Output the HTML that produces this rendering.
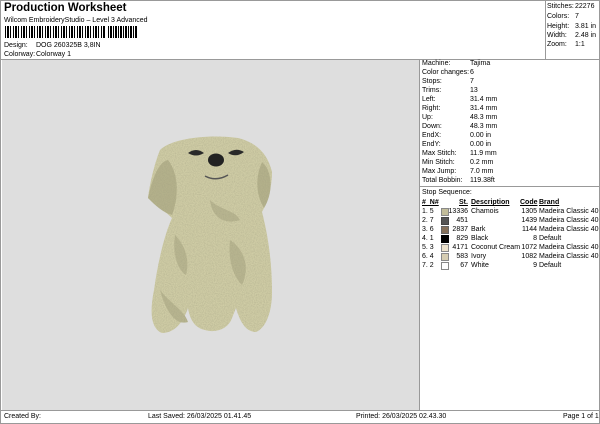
<!DOCTYPE html>
<html><head><style>
body{margin:0;width:600px;height:424px;background:#fff;font-family:"Liberation Sans",sans-serif;position:relative;overflow:hidden;color:#000}
.a{position:absolute;white-space:nowrap;font-size:7px;line-height:9px}
</style></head><body>
<div style="position:absolute;left:0;top:0;width:598px;height:422px;border:1px solid #999"></div>
<div class="a" style="left:4px;top:1px;font-size:11.5px;line-height:14px;font-weight:bold">Production Worksheet</div>
<div class="a" style="left:4px;top:16px">Wilcom EmbroideryStudio – Level 3 Advanced</div>
<div style="position:absolute;left:5px;top:26px;width:100px;height:12px;background:repeating-linear-gradient(90deg,#000 0 1px,#fff 1px 2px,#000 2px 4px,#fff 4px 5px,#000 5px 6px,#fff 6px 8px)"></div>
<div style="position:absolute;left:108px;top:26px;width:30px;height:12px;background:repeating-linear-gradient(90deg,#000 0 1px,#fff 1px 2px,#000 2px 4px,#fff 4px 5px)"></div>
<div class="a" style="left:4px;top:41px">Design:</div><div class="a" style="left:36px;top:41px">DOG 260325B 3,8IN</div>
<div class="a" style="left:4px;top:50px">Colorway:</div><div class="a" style="left:36px;top:50px">Colorway 1</div>
<div style="position:absolute;left:545px;top:0;width:1px;height:59px;background:#999"></div>
<div class="a" style="left:547px;top:2px">Stitches:</div><div class="a" style="left:575px;top:2px">22276</div>
<div class="a" style="left:547px;top:12px">Colors:</div><div class="a" style="left:575px;top:12px">7</div>
<div class="a" style="left:547px;top:22px">Height:</div><div class="a" style="left:575px;top:22px">3.81 in</div>
<div class="a" style="left:547px;top:31px">Width:</div><div class="a" style="left:575px;top:31px">2.48 in</div>
<div class="a" style="left:547px;top:40px">Zoom:</div><div class="a" style="left:575px;top:40px">1:1</div>
<div style="position:absolute;left:1px;top:59px;width:598px;height:1px;background:#999"></div>
<div style="position:absolute;left:2px;top:60px;width:417px;height:350px;background:#dedede"></div>
<div style="position:absolute;left:419px;top:60px;width:1px;height:350px;background:#999"></div>
<div style="position:absolute;left:420px;top:186px;width:179px;height:1px;background:#999"></div>
<div style="position:absolute;left:1px;top:410px;width:598px;height:1px;background:#999"></div>
<svg style="position:absolute;left:0;top:0" width="600" height="424">
<defs><filter id="n"><feTurbulence type="fractalNoise" baseFrequency="0.9" numOctaves="2" result="t"/><feColorMatrix in="t" type="matrix" values="0 0 0 0 0.35  0 0 0 0 0.34  0 0 0 0 0.22  0 0 0 0.9 -0.3" result="c"/><feComposite in="c" in2="SourceGraphic" operator="in" result="m"/><feMerge><feMergeNode in="SourceGraphic"/><feMergeNode in="m"/></feMerge></filter></defs>
<g filter="url(#n)">
<path d="M160 150 C172 138 210 134 238 138 C258 143 268 155 272 172 C272 190 266 205 262 212 C268 235 272 262 272 292 C272 312 266 328 256 332 C246 332 240 322 236 308 L232 318 C228 330 214 333 205 330 C195 328 190 320 188 308 C184 320 176 333 162 333 C150 328 150 310 154 290 C158 262 164 236 172 218 C164 210 155 205 148 198 C150 182 155 162 160 150Z" fill="#cfcca5"/>
<path d="M148 198 C152 180 158 162 168 160 C180 175 178 200 172 215 C162 212 155 205 148 198Z M262 162 C272 170 274 192 264 208 C256 195 255 178 262 162Z" fill="#b4b18b"/>
<path d="M175 235 C185 245 190 260 186 275 C178 270 172 255 175 235Z M230 240 C245 250 250 268 242 285 C232 275 228 258 230 240Z M160 290 C172 305 184 310 188 322 C176 326 166 312 160 290Z M210 200 C220 210 235 210 240 220 C225 225 212 218 210 200Z" fill="#b8b590"/>
</g>
<path d="M188 153 Q196 147 204 153 Q196 158 188 153Z" fill="#2a2a2a"/>
<path d="M228 153 Q236 147 244 152 Q236 158 228 153Z" fill="#2a2a2a"/>
<ellipse cx="216" cy="160" rx="8" ry="6.5" fill="#222"/>
<path d="M205 176 Q216 182 228 175" stroke="#555" stroke-width="1.5" fill="none"/>
</svg>
<div class="a" style="left:422px;top:59px;line-height:9px;top:59px">Machine:<br>Color changes:<br>Stops:<br>Trims:<br>Left:<br>Right:<br>Up:<br>Down:<br>EndX:<br>EndY:<br>Max Stitch:<br>Min Stitch:<br>Max Jump:<br>Total Bobbin:</div>
<div class="a" style="left:470px;top:59px;line-height:9px">Tajima<br>6<br>7<br>13<br>31.4 mm<br>31.4 mm<br>48.3 mm<br>48.3 mm<br>0.00 in<br>0.00 in<br>11.9 mm<br>0.2 mm<br>7.0 mm<br>119.38ft</div>
<div class="a" style="left:422px;top:188px">Stop Sequence:</div>
<div class="a" style="left:422px;top:198px;font-weight:bold;text-decoration:underline">#&nbsp; N#</div>
<div class="a" style="left:459px;top:198px;font-weight:bold;text-decoration:underline">St.</div>
<div class="a" style="left:471px;top:198px;font-weight:bold;text-decoration:underline">Description</div>
<div class="a" style="left:520px;top:198px;font-weight:bold;text-decoration:underline">Code</div>
<div class="a" style="left:539px;top:198px;font-weight:bold;text-decoration:underline">Brand</div>
<div class="a" style="left:422px;top:207px">1. 5<br>2. 7<br>3. 6<br>4. 1<br>5. 3<br>6. 4<br>7. 2</div>
<div style="position:absolute;left:441px;top:208px;width:6px;height:6px;background:#c2bd9a;border:1px solid #888"></div>
<div style="position:absolute;left:441px;top:217px;width:6px;height:6px;background:#555;border:1px solid #444"></div>
<div style="position:absolute;left:441px;top:226px;width:6px;height:6px;background:#85705a;border:1px solid #666"></div>
<div style="position:absolute;left:441px;top:235px;width:6px;height:6px;background:#000;border:1px solid #000"></div>
<div style="position:absolute;left:441px;top:244px;width:6px;height:6px;background:#ece2cc;border:1px solid #888"></div>
<div style="position:absolute;left:441px;top:253px;width:6px;height:6px;background:#d6cdb2;border:1px solid #888"></div>
<div style="position:absolute;left:441px;top:262px;width:6px;height:6px;background:#fff;border:1px solid #888"></div>
<div class="a" style="left:448px;top:207px;width:20px;text-align:right">13336<br>451<br>2837<br>829<br>4171<br>583<br>67</div>
<div class="a" style="left:471px;top:207px">Chamois<br>&nbsp;<br>Bark<br>Black<br>Coconut Cream<br>Ivory<br>White</div>
<div class="a" style="left:516px;top:207px;width:21px;text-align:right">1305<br>1439<br>1144<br>8<br>1072<br>1082<br>9</div>
<div class="a" style="left:539px;top:207px">Madeira Classic 40<br>Madeira Classic 40<br>Madeira Classic 40<br>Default<br>Madeira Classic 40<br>Madeira Classic 40<br>Default</div>
<div class="a" style="left:4px;top:412px">Created By:</div>
<div class="a" style="left:148px;top:412px">Last Saved: 26/03/2025 01.41.45</div>
<div class="a" style="left:356px;top:412px">Printed: 26/03/2025 02.43.30</div>
<div class="a" style="left:563px;top:412px">Page 1 of 1</div>
</body></html>
